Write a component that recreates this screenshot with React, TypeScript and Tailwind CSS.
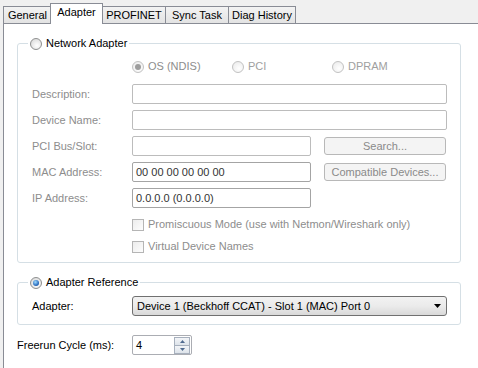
import React from "react"

const font = "font-['Liberation_Sans',Arial,sans-serif] text-[11px] leading-[13px]"

function Radio({ checked = false, disabled = false }: { checked?: boolean; disabled?: boolean }) {
  return (
    <span
      className={`inline-flex h-[12px] w-[12px] shrink-0 items-center justify-center rounded-full border ${
        disabled
          ? "border-[#c2c2c2] bg-[radial-gradient(circle_at_60%_65%,#ffffff,#e8e8e8)]"
          : "border-[#8e8f8f] bg-[radial-gradient(circle_at_60%_65%,#ffffff,#d4d4d4)]"
      }`}
    >
      {checked && (
        <span
          className={`h-[6px] w-[6px] rounded-full ${
            disabled
              ? "bg-[#9d9d9d]"
              : "bg-[radial-gradient(circle_at_40%_35%,#9fdcff,#2d6fc0_60%,#123d7a)]"
          }`}
        />
      )}
    </span>
  )
}

function Check() {
  return (
    <span className="inline-block h-[12px] w-[12px] shrink-0 border border-[#b5b5b5] bg-gradient-to-br from-[#ececec] to-[#fdfdfd]" />
  )
}

function Field({ label, wide = false, value, dark = false, button }: { label: string; wide?: boolean; value?: string; dark?: boolean; button?: string }) {
  return (
    <div className="flex h-[20px] items-center">
      <span className="w-[100px] text-[#8d8d8d]">{label}</span>
      <div
        className={`flex h-[20px] items-center rounded-[2px] border bg-white pl-[3px] text-[#333] ${
          dark ? "border-[#a4a4a4]" : "border-[#bcbcbc]"
        } ${wide ? "w-[315px]" : "w-[179px]"}`}
      >
        {value}
      </div>
      {button && (
        <div className="ml-[13px] flex h-[18px] w-[122px] items-center justify-center rounded-[3px] border border-[#b8b8b8] bg-[#f4f4f4] text-[#8a8a8a]">
          {button}
        </div>
      )}
    </div>
  )
}

const tabs = [
  { name: "General", w: "w-[49px]" },
  { name: "Adapter", w: "w-[53px]", active: true },
  { name: "PROFINET", w: "w-[64px]" },
  { name: "Sync Task", w: "w-[64px]" },
  { name: "Diag History", w: "w-[68px]" },
]

export default function App() {
  return (
    <div className={`${font} flex h-[368px] w-[478px] flex-col overflow-hidden bg-[#f0f0f0] text-black`}>
      {/* tab strip */}
      <div className="flex h-[23px] items-end pl-[3px]">
        {tabs.map((t) =>
          t.active ? (
            <div
              key={t.name}
              className={`${t.w} relative z-10 -mx-px mb-[-1px] flex h-[21px] items-center justify-center border border-b-0 border-[#898c95] bg-white pb-[3px]`}
            >
              {t.name}
            </div>
          ) : (
            <div
              key={t.name}
              className={`${t.w} -mr-px flex h-[17px] items-center justify-center border border-b-0 border-[#898c95] bg-gradient-to-b from-[#f3f3f3] to-[#e3e3e3] pt-[1px]`}
            >
              {t.name}
            </div>
          )
        )}
      </div>

      {/* page */}
      <div className="ml-[3px] flex-1 border-l border-t border-[#898c95] bg-white">
        <fieldset className="ml-[13px] mt-[13px] w-[444px] rounded-[3px] border border-[#d5dfe5] p-0">
          <legend className="ml-[10px] flex items-center gap-[4px] px-[2px]">
            <Radio />
            <span>Network Adapter</span>
          </legend>
          <div className="flex flex-col pb-[9px] pl-[14px]">
            <div className="ml-[100px] mt-[10px] flex h-[13px] items-center">
              <div className="flex w-[100px] items-center gap-[4px] text-[#8d8d8d]">
                <Radio checked disabled />
                <span>OS (NDIS)</span>
              </div>
              <div className="flex w-[100px] items-center gap-[4px] text-[#a0a0a0]">
                <Radio disabled />
                <span>PCI</span>
              </div>
              <div className="flex items-center gap-[4px] text-[#a0a0a0]">
                <Radio disabled />
                <span>DPRAM</span>
              </div>
            </div>
            <div className="mt-[11px] flex flex-col gap-[6px]">
              <Field label="Description:" wide />
              <Field label="Device Name:" wide />
              <Field label="PCI Bus/Slot:" button="Search..." />
              <Field label="MAC Address:" value="00 00 00 00 00 00" dark button="Compatible Devices..." />
              <Field label="IP Address:" value="0.0.0.0 (0.0.0.0)" dark />
            </div>
            <div className="ml-[100px] mt-[10px] flex flex-col gap-[9px] text-[#8d8d8d]">
              <div className="flex h-[13px] items-center gap-[4px]">
                <Check />
                <span>Promiscuous Mode (use with Netmon/Wireshark only)</span>
              </div>
              <div className="flex h-[13px] items-center gap-[4px]">
                <Check />
                <span>Virtual Device Names</span>
              </div>
            </div>
          </div>
        </fieldset>

        <fieldset className="ml-[13px] mt-[13px] w-[444px] rounded-[3px] border border-[#d5dfe5] p-0">
          <legend className="ml-[10px] flex items-center gap-[4px] px-[2px]">
            <Radio checked />
            <span>Adapter Reference</span>
          </legend>
          <div className="flex items-center pb-[8px] pl-[14px] pt-[7px]">
            <span className="w-[100px]">Adapter:</span>
            <div className="flex h-[20px] w-[315px] items-center justify-between rounded-[3px] border border-[#707070] bg-gradient-to-b from-[#f2f2f2] via-[#ebebeb] to-[#d9d9d9] pl-[4px] pr-[5px]">
              <span>Device 1 (Beckhoff CCAT) - Slot 1 (MAC) Port 0</span>
              <svg width="7" height="4" viewBox="0 0 7 4">
                <path d="M0 0H7L3.5 4Z" fill="#000" />
              </svg>
            </div>
          </div>
        </fieldset>

        <div className="ml-[13px] mt-[10px] flex items-center">
          <span className="w-[115px]">Freerun Cycle (ms):</span>
          <div className="flex h-[20px] w-[60px] items-center justify-between rounded-[2px] border border-[#abadb3] bg-white pl-[3px] pr-px">
            <span>4</span>
            <div className="flex h-[17px] w-[16px] flex-col">
              <div className="flex flex-1 items-center justify-center border border-[#a7b0bd] bg-gradient-to-b from-[#f3f5f8] to-[#dde3ea]">
                <svg width="5" height="3" viewBox="0 0 5 3">
                  <path d="M0 3H5L2.5 0Z" fill="#4f6a8f" />
                </svg>
              </div>
              <div className="flex flex-1 items-center justify-center border border-t-0 border-[#a7b0bd] bg-gradient-to-b from-[#f3f5f8] to-[#dde3ea]">
                <svg width="5" height="3" viewBox="0 0 5 3">
                  <path d="M0 0H5L2.5 3Z" fill="#4f6a8f" />
                </svg>
              </div>
            </div>
          </div>
        </div>
      </div>
    </div>
  )
}
